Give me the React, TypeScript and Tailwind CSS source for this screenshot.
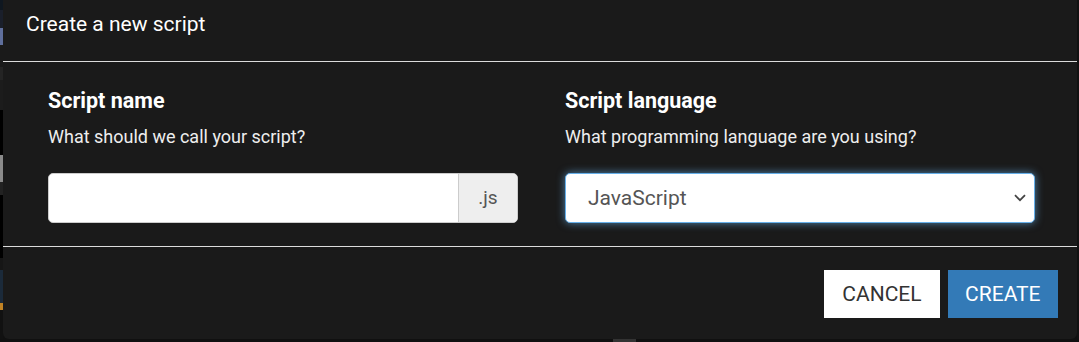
export default function App() {
  return (
    <div className="flex h-[342px] w-[1079px] flex-col overflow-hidden bg-[#101010] font-['Roboto',sans-serif]">
      <div className="flex h-[339px]">
        {/* page behind the modal, only a sliver shows */}
        <div className="flex w-[3px] flex-col">
          <div className="h-[10px] bg-[#0f1720]" />
          <div className="h-[18px] bg-[#1a1f2b]" />
          <div className="h-[17px] bg-[#5f6f9c]" />
          <div className="h-[22px] bg-[#1a1a1a]" />
          <div className="h-[13px] bg-[#242424]" />
          <div className="h-[30px] bg-[#1c1c1c]" />
          <div className="h-[45px] bg-black" />
          <div className="h-[27px] bg-[#8a8a8a]" />
          <div className="h-[13px] bg-[#222]" />
          <div className="h-[63px] bg-black" />
          <div className="h-[12px] bg-[#161616]" />
          <div className="h-[33px] bg-[#1b2a3a]" />
          <div className="h-[7px] bg-[#c08224]" />
          <div className="flex-1 bg-[#111]" />
        </div>

        <div className="flex w-[1074px] flex-col rounded-b-[6px] bg-[#1a1a1a] text-white">
          <div className="h-[62px] border-b border-[#dcdcdc] pl-[23px] pt-[10px]">
            <h4 className="text-[21px] leading-[28px]">Create a new script</h4>
          </div>

          <div className="grid h-[184px] grid-cols-2 gap-[47px] pl-[45px] pr-[42px] pt-[26px]">
            <div>
              <div className="text-[21.5px] font-bold leading-[26px]">Script name</div>
              <div className="mt-[11px] text-[18px] leading-[24px] text-[#eee]">
                What should we call your script?
              </div>
              <div className="mt-[24px] flex h-[50px] overflow-hidden rounded-[5px] border border-[#ccc] bg-white">
                <div className="flex-1" />
                <div className="flex w-[59px] items-center justify-center border-l border-[#ccc] bg-[#eee] pt-[1px] text-[19px] text-[#555]">
                  .js
                </div>
              </div>
            </div>
            <div>
              <div className="text-[21.5px] font-bold leading-[26px]">Script language</div>
              <div className="mt-[11px] text-[18px] leading-[24px] text-[#eee]">
                What programming language are you using?
              </div>
              <div className="mt-[24px] flex h-[50px] items-center justify-between rounded-[5px] border border-[#66afe9] bg-white pl-[22px] pr-[8px] shadow-[0_0_9px_rgba(102,175,233,0.7)]">
                <span className="pt-[1px] text-[21px] text-[#555]">JavaScript</span>
                <svg width="12" height="8" viewBox="0 0 12 8" fill="none">
                  <path d="M1 1.2 6 6.2 11 1.2" stroke="#444" strokeWidth="1.8" />
                </svg>
              </div>
            </div>
          </div>

          <div className="flex flex-1 items-start justify-end gap-[8px] border-t border-[#dcdcdc] pr-[19px] pt-[23px]">
            <button className="h-[48px] bg-white px-[18px] pt-[1px] text-[21px] text-[#333]">CANCEL</button>
            <button className="h-[48px] bg-[#337ab7] px-[17.5px] pt-[1px] text-[21px] text-white">CREATE</button>
          </div>
        </div>

        <div className="flex-1 bg-[#111]" />
      </div>
      <div className="flex h-[3px]">
        <div className="ml-[613px] w-[23px] bg-[#333]" />
      </div>
    </div>
  );
}
